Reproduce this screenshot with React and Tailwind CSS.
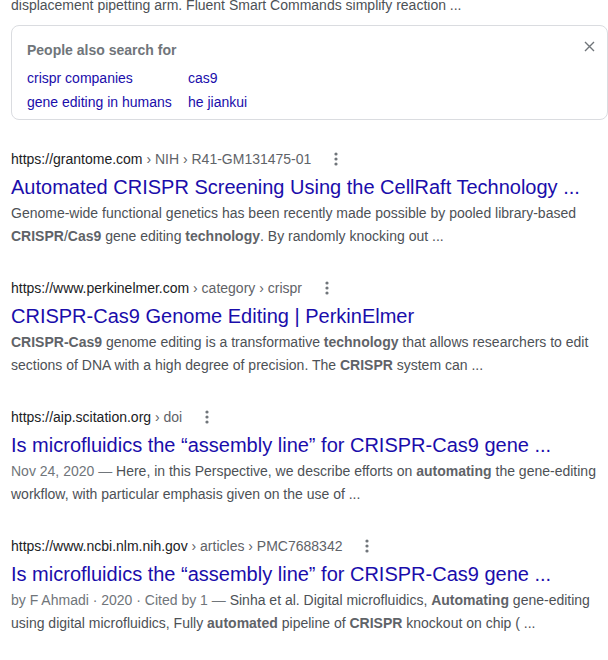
import React from 'react'

const RESULTS = [
  {
    site: 'https://grantome.com',
    crumbs: ' › NIH › R41-GM131475-01',
    title: 'Automated CRISPR Screening Using the CellRaft Technology ...',
    snippet: [
      ['Genome-wide functional genetics has been recently made possible by pooled library-based '],
      ['CRISPR', 'b'], ['/'], ['Cas9', 'b'], [' gene editing '], ['technology', 'b'], ['. By randomly knocking out ...'],
    ],
  },
  {
    site: 'https://www.perkinelmer.com',
    crumbs: ' › category › crispr',
    title: 'CRISPR-Cas9 Genome Editing | PerkinElmer',
    snippet: [
      ['CRISPR-Cas9', 'b'], [' genome editing is a transformative '], ['technology', 'b'],
      [' that allows researchers to edit sections of DNA with a high degree of precision. The '],
      ['CRISPR', 'b'], [' system can ...'],
    ],
  },
  {
    site: 'https://aip.scitation.org',
    crumbs: ' › doi',
    title: 'Is microfluidics the \u201cassembly line\u201d for CRISPR-Cas9 gene ...',
    snippet: [
      ['Nov 24, 2020 \u2014 ', 'm'], ['Here, in this Perspective, we describe efforts on '], ['automating', 'b'],
      [' the gene-editing workflow, with particular emphasis given on the use of ...'],
    ],
  },
  {
    site: 'https://www.ncbi.nlm.nih.gov',
    crumbs: ' › articles › PMC7688342',
    title: 'Is microfluidics the \u201cassembly line\u201d for CRISPR-Cas9 gene ...',
    snippet: [
      ['by F Ahmadi \u00b7 2020 \u00b7 Cited by 1 \u2014 ', 'm'], ['Sinha et al. Digital microfluidics, '], ['Automating', 'b'],
      [' gene-editing using digital microfluidics, Fully '], ['automated', 'b'], [' pipeline of '], ['CRISPR', 'b'],
      [' knockout on chip ( ...'],
    ],
  },
]

function Dots() {
  return (
    <svg width="4" height="16" viewBox="0 0 4 16" className="ml-[23px] shrink-0">
      <circle cx="2" cy="3" r="1.6" fill="#70757a" />
      <circle cx="2" cy="8" r="1.6" fill="#70757a" />
      <circle cx="2" cy="13" r="1.6" fill="#70757a" />
    </svg>
  )
}

function Snippet({ parts }) {
  return (
    <div className="mt-[2px] text-[14px] leading-[23px] text-[#4d5156]">
      {parts.map(([t, k], i) =>
        k === 'b' ? <b key={i} className="font-bold text-[#5f6368]">{t}</b>
        : k === 'm' ? <span key={i} className="text-[#70757a]">{t}</span>
        : <span key={i}>{t}</span>
      )}
    </div>
  )
}

function Result({ r }) {
  return (
    <div className="mb-[29px]">
      <div className="flex items-center h-[22px] text-[14px] leading-[22px]">
        <span className="text-[#202124]">{r.site}</span>
        <span className="text-[#5f6368] whitespace-pre">{r.crumbs}</span>
        <Dots />
      </div>
      <h3 className="mt-[4px] text-[20px] leading-[26px] text-[#1a0dab] font-normal whitespace-nowrap">{r.title}</h3>
      <Snippet parts={r.snippet} />
    </div>
  )
}

export default function App() {
  return (
    <div className="w-[608px] h-[660px] overflow-hidden bg-white pl-[11px]" style={{ fontFamily: '"Liberation Sans", Arial, sans-serif' }}>
      <div className="-mt-[6px] text-[14px] leading-[23px] text-[#4d5156]">
        displacement pipetting arm. Fluent Smart Commands simplify reaction ...
      </div>

      <div className="relative mt-[8px] w-[597px] border border-[#dadce0] rounded-[8px] pl-[15px] pt-[14px] pb-[5px]">
        <div className="text-[14px] leading-[20px] font-bold text-[#70757a]">People also search for</div>
        <div className="grid grid-cols-[161px_1fr] mt-[6px] text-[14px] leading-[24px] text-[#1a0dab]">
          <span>crispr companies</span>
          <span>cas9</span>
          <span>gene editing in humans</span>
          <span>he jiankui</span>
        </div>
        <svg width="11" height="11" viewBox="0 0 11 11" className="absolute right-[12px] top-[15px]">
          <path d="M1 1L10 10M10 1L1 10" stroke="#70757a" strokeWidth="1.4" />
        </svg>
      </div>

      <div className="mt-[28px]">
        {RESULTS.map((r, i) => <Result key={i} r={r} />)}
      </div>
    </div>
  )
}
